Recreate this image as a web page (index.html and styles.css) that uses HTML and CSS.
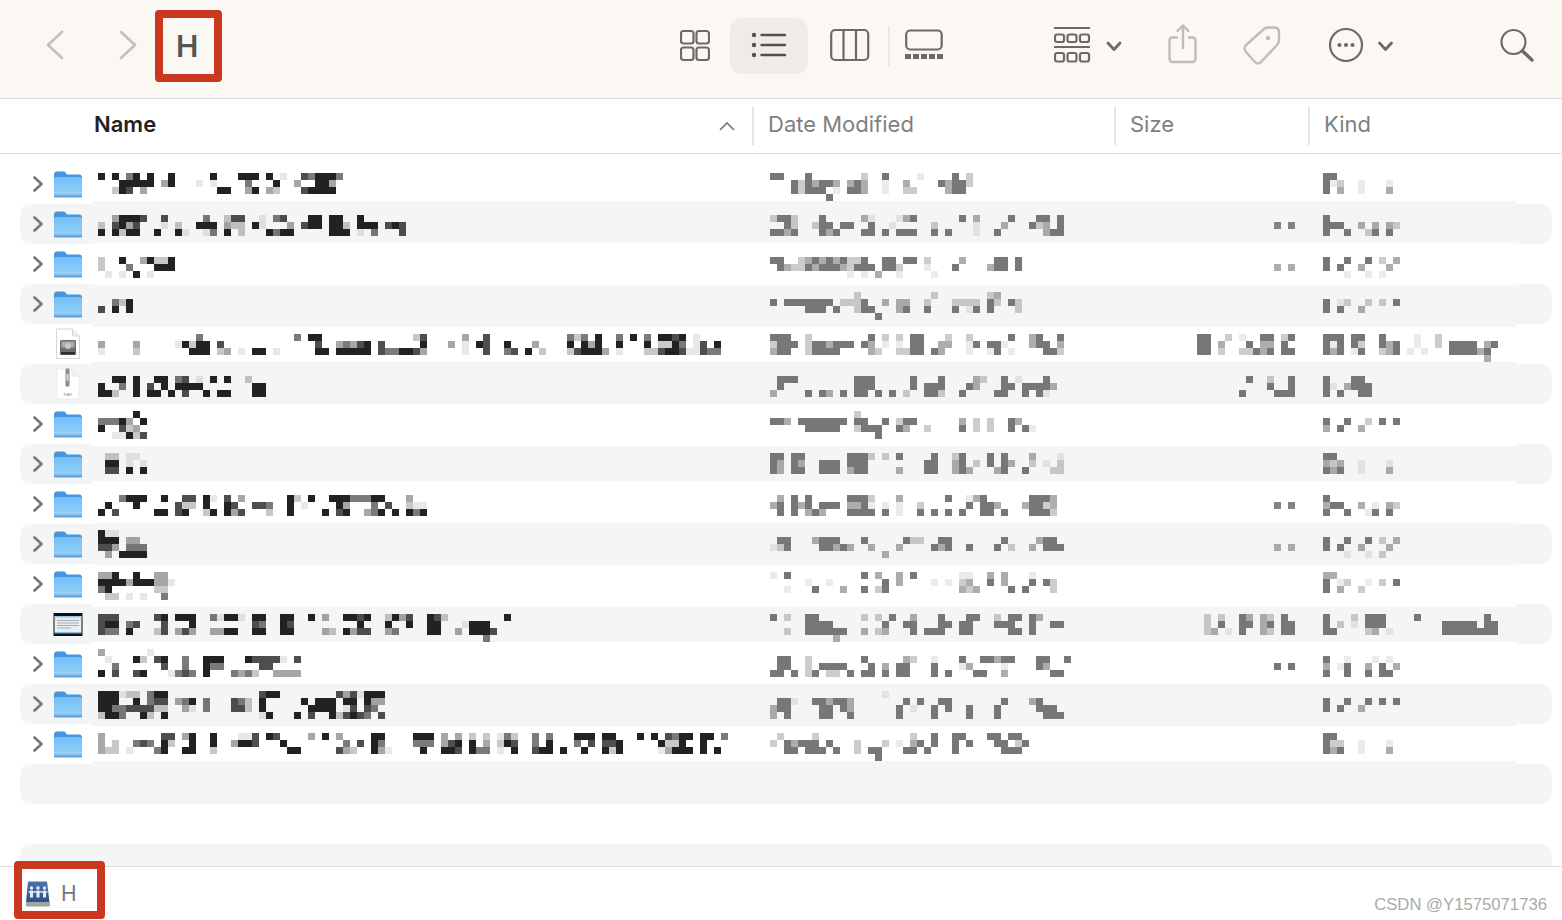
FILE: index.html
```html
<!DOCTYPE html>
<html>
<head>
    <title>H</title>
    <link rel="stylesheet" href="styles.css">
</head>
<body>
    <svg class="defs" width="0" height="0">
        <defs>
            <linearGradient id="folderFront" x1="0" y1="0" x2="0" y2="1">
                <stop offset="0" stop-color="#74bff6"></stop>
                <stop offset="0.75" stop-color="#8bcdfa"></stop>
                <stop offset="1" stop-color="#78bcee"></stop>
            </linearGradient>
            <linearGradient id="diskBlue" x1="0" y1="0" x2="0" y2="1">
                <stop offset="0" stop-color="#4a74aa"></stop>
                <stop offset="1" stop-color="#2d4f80"></stop>
            </linearGradient>
            <symbol id="chev" viewBox="0 0 12 16">
                <polyline points="2.5,1.5 9.5,8 2.5,14.5" fill="none" stroke="#777" stroke-width="2.6" stroke-linecap="round" stroke-linejoin="round"></polyline>
            </symbol>
            <symbol id="folder" viewBox="0 0 30 28">
                <path d="M1 5a3 3 0 0 1 3-3.500h7.500l2.500 3h12a3 3 0 0 1 3 3V14H1z" fill="#4595e2"></path>
                <rect x="1" y="7" width="28" height="20" rx="2" fill="url(#folderFront)"></rect>
                <rect x="1" y="25.500" width="28" height="2" rx="1" fill="#5a9fd6"></rect>
                <path d="M2 22.500h26" stroke="#aedbfb" stroke-width="0.600"></path>
            </symbol>
        </defs>
    </svg>

    <div class="window">
        <div class="toolbar">
            <svg class="back" width="22" height="60" viewBox="0 0 22 60"><polyline points="18,16 4,29 18,42" class="faint-line"></polyline></svg>
            <svg class="forward" width="22" height="60" viewBox="0 0 22 60"><polyline points="5,16 19,29 5,42" class="faint-line"></polyline></svg>
            <div class="title">H</div>

            <svg class="grid-view" width="30" height="60" viewBox="0 0 30 60">
                <g class="tool-line">
                    <rect x="1" y="15" width="12.500" height="12.500" rx="2.500"></rect>
                    <rect x="16.500" y="15" width="12.500" height="12.500" rx="2.500"></rect>
                    <rect x="1" y="31.500" width="12.500" height="12.500" rx="2.500"></rect>
                    <rect x="16.500" y="31.500" width="12.500" height="12.500" rx="2.500"></rect>
                </g>
            </svg>
            <div class="active-view">
                <svg width="78" height="56" viewBox="0 0 78 56">
                    <circle cx="24" cy="17" r="2.200" fill="#55504a"></circle>
                    <circle cx="24" cy="27" r="2.200" fill="#55504a"></circle>
                    <circle cx="24" cy="37" r="2.200" fill="#55504a"></circle>
                    <path d="M31.500 17H55M31.500 27H55M31.500 37H55" stroke="#55504a" stroke-width="2.400" stroke-linecap="round"></path>
                </svg>
            </div>
            <svg class="column-view" width="40" height="60" viewBox="0 0 40 60">
                <g class="tool-line">
                    <rect x="1.200" y="14" width="37" height="30" rx="4"></rect>
                    <path d="M13.500 14V44M26 14V44"></path>
                </g>
            </svg>
            <div class="tool-sep"></div>
            <svg class="gallery-view" width="40" height="60" viewBox="0 0 40 60">
                <rect x="1.200" y="14.500" width="35.500" height="19" rx="4" class="tool-line"></rect>
                <g fill="#6e6962">
                    <rect x="0" y="38" width="6" height="5"></rect>
                    <rect x="8" y="38" width="6" height="5"></rect>
                    <rect x="16" y="38" width="6" height="5"></rect>
                    <rect x="24" y="38" width="6" height="5"></rect>
                    <rect x="32" y="38" width="6" height="5"></rect>
                </g>
            </svg>
            <svg class="group-view" width="38" height="60" viewBox="0 0 38 60">
                <g class="tool-line">
                    <path d="M0 12H36M0 31H36"></path>
                    <rect x="1" y="18.500" width="9" height="7.500" rx="2"></rect>
                    <rect x="13.500" y="18.500" width="9" height="7.500" rx="2"></rect>
                    <rect x="26" y="18.500" width="9" height="7.500" rx="2"></rect>
                    <rect x="1" y="37" width="9" height="8.500" rx="2"></rect>
                    <rect x="13.500" y="37" width="9" height="8.500" rx="2"></rect>
                    <rect x="26" y="37" width="9" height="8.500" rx="2"></rect>
                </g>
            </svg>
            <svg class="drop" width="18" height="60" viewBox="0 0 18 60"><polyline points="2,27 8,33.500 14,27" class="chev-line"></polyline></svg>
            <svg class="share" width="30" height="60" viewBox="0 0 30 60">
                <g class="faint-tool">
                    <path d="M9 21.500H4.500a3 3 0 0 0-3 3V43a3 3 0 0 0 3 3h20a3 3 0 0 0 3-3V24.500a3 3 0 0 0-3-3H21"></path>
                    <path d="M15 10V32M9.500 15L15 9.500L20.500 15"></path>
                </g>
            </svg>
            <svg class="tag" width="38" height="60" viewBox="0 0 38 60">
                <path class="faint-tool" d="M3 29L21.500 12.500Q23 11.500 25 11.500H31Q36 11.500 36 16.500V24Q36 27 34 29L18 46Q15 49 12 46L3 36Q0 32 3 29Z"></path>
                <circle cx="25" cy="22" r="2.200" fill="#bfbbb5"></circle>
            </svg>
            <svg class="more" width="36" height="60" viewBox="0 0 36 60">
                <circle cx="17" cy="29" r="16" class="tool-line"></circle>
                <circle cx="10.500" cy="29" r="2.100" fill="#6e6962"></circle>
                <circle cx="17" cy="29" r="2.100" fill="#6e6962"></circle>
                <circle cx="23.500" cy="29" r="2.100" fill="#6e6962"></circle>
            </svg>
            <svg class="drop drop-more" width="18" height="60" viewBox="0 0 18 60"><polyline points="2.500,27 8.500,33.500 14.500,27" class="chev-line"></polyline></svg>
            <svg class="search" width="36" height="60" viewBox="0 0 36 60">
                <circle cx="14.500" cy="26" r="12" class="tool-line"></circle>
                <path d="M23.500 35L33 44" stroke="#6e6962" stroke-width="3.400" stroke-linecap="round"></path>
            </svg>
        </div>

        <div class="list-head">
            <div class="col col-name">
                <span>Name</span>
                <svg width="16" height="10" viewBox="0 0 16 10"><polyline points="1,9 8,2 15,9" fill="none" stroke="#777" stroke-width="1.600"></polyline></svg>
            </div>
            <div class="col">Date Modified</div>
            <div class="col">Size</div>
            <div class="col">Kind</div>
        </div>

        <div class="list">
            <div class="row"><svg class="chev"><use href="#chev"></use></svg><svg class="icon"><use href="#folder"></use></svg></div>
            <div class="row"><svg class="chev"><use href="#chev"></use></svg><svg class="icon"><use href="#folder"></use></svg></div>
            <div class="row"><svg class="chev"><use href="#chev"></use></svg><svg class="icon"><use href="#folder"></use></svg></div>
            <div class="row"><svg class="chev"><use href="#chev"></use></svg><svg class="icon"><use href="#folder"></use></svg></div>
            <div class="row">
                <span class="chev"></span>
                <svg class="icon" viewBox="0 0 30 32">
                    <path d="M3.500 1h16l7 7v22.500h-23z" fill="#fff" stroke="#d6d6d6"></path>
                    <path d="M19.500 1v7h7" fill="#f2f2f2" stroke="#d6d6d6"></path>
                    <rect x="7" y="12" width="16" height="15" rx="1.500" fill="#6b6f72"></rect>
                    <rect x="8.500" y="13.500" width="13" height="6" fill="#a8acaf"></rect>
                    <rect x="8" y="24" width="14" height="2.500" fill="#2d2f31"></rect>
                    <circle cx="15" cy="18" r="3" fill="#c4c6c8"></circle>
                </svg>
            </div>
            <div class="row">
                <span class="chev"></span>
                <svg class="icon" viewBox="0 0 30 32">
                    <path d="M4 1h15l7 7v23H4z" fill="#fff" stroke="#ececec"></path>
                    <path d="M19 1v7h7" fill="#f3f3f3" stroke="#e6e6e6"></path>
                    <rect x="12.500" y="0.500" width="4" height="18" rx="1" fill="#8a8d90"></rect>
                    <rect x="13.500" y="6" width="2" height="7" fill="#d8d8d8"></rect>
                    <text x="15" y="28" class="rar">RAR</text>
                </svg>
            </div>
            <div class="row"><svg class="chev"><use href="#chev"></use></svg><svg class="icon"><use href="#folder"></use></svg></div>
            <div class="row"><svg class="chev"><use href="#chev"></use></svg><svg class="icon"><use href="#folder"></use></svg></div>
            <div class="row"><svg class="chev"><use href="#chev"></use></svg><svg class="icon"><use href="#folder"></use></svg></div>
            <div class="row"><svg class="chev"><use href="#chev"></use></svg><svg class="icon"><use href="#folder"></use></svg></div>
            <div class="row"><svg class="chev"><use href="#chev"></use></svg><svg class="icon"><use href="#folder"></use></svg></div>
            <div class="row">
                <span class="chev"></span>
                <svg class="icon" viewBox="0 0 30 32">
                    <rect x="0.500" y="5" width="29" height="23" fill="#111"></rect>
                    <rect x="1.500" y="8" width="27" height="16" fill="#e8eef0"></rect>
                    <rect x="1.500" y="8" width="27" height="1.500" fill="#8fc8ee"></rect>
                    <path d="M4 12.500h22M4 15h22M4 17.500h22M4 20h14" stroke="#a8aeb2" stroke-width="1"></path>
                    <rect x="1.500" y="24" width="27" height="1.500" fill="#7dbbe6"></rect>
                </svg>
            </div>
            <div class="row"><svg class="chev"><use href="#chev"></use></svg><svg class="icon"><use href="#folder"></use></svg></div>
            <div class="row"><svg class="chev"><use href="#chev"></use></svg><svg class="icon"><use href="#folder"></use></svg></div>
            <div class="row"><svg class="chev"><use href="#chev"></use></svg><svg class="icon"><use href="#folder"></use></svg></div>
            <div class="row"></div>
            <div class="row"></div>
            <div class="row"></div>
        </div>

        <div class="status">
            <svg class="disk" width="26" height="28" viewBox="0 0 26 28">
                <path d="M3 1.500h19l2.500 21H1z" fill="url(#diskBlue)"></path>
                <rect x="1" y="22.500" width="24" height="4" rx="1" fill="#a5a595"></rect>
                <g fill="#e6edf5">
                    <circle cx="6.500" cy="8" r="1.700"></circle>
                    <circle cx="13" cy="8" r="1.700"></circle>
                    <circle cx="19.500" cy="8" r="1.700"></circle>
                    <rect x="5" y="10.500" width="3" height="7"></rect>
                    <rect x="11.500" y="10.500" width="3" height="7"></rect>
                    <rect x="18" y="10.500" width="3" height="7"></rect>
                    <rect x="3.500" y="11" width="19" height="2" opacity="0.700"></rect>
                </g>
            </svg>
            <span class="status-name">H</span>
        </div>

        <svg id="mosaic" class="mosaic" width="1562" height="920" viewBox="0 0 1562 920"></svg>
        <div class="mark mark-title"></div>
        <div class="mark mark-status"></div>
        <div class="watermark">CSDN @Y1575071736</div>
    </div>

    <script src="script.js"></script>
</body>
</html>
```

FILE: styles.css
```css
* {
    margin: 0;
    padding: 0;
    box-sizing: border-box;
}

body {
    font-family: 'Inter', 'Liberation Sans', sans-serif;
    background: #fff;
    overflow: hidden;
}

.defs {
    position: absolute;
}

.window {
    position: relative;
    display: flex;
    flex-direction: column;
    width: 1562px;
    height: 920px;
    overflow: hidden;
}

/* toolbar */
.toolbar {
    display: flex;
    align-items: center;
    flex: none;
    height: 99px;
    padding: 0 0 7px 44px;
    background: #fbf8f4;
    border-bottom: 1px solid #dcdad7;
}

.toolbar svg {
    flex: none;
    display: block;
}

.tool-line {
    fill: none;
    stroke: #6e6962;
    stroke-width: 2.2;
}

.faint-line {
    fill: none;
    stroke: #c4c0ba;
    stroke-width: 2.8;
    stroke-linecap: round;
    stroke-linejoin: round;
}

.faint-tool {
    fill: none;
    stroke: #bfbbb5;
    stroke-width: 2.4;
    stroke-linecap: round;
    stroke-linejoin: round;
}

.chev-line {
    fill: none;
    stroke: #6e6962;
    stroke-width: 2.8;
    stroke-linecap: round;
    stroke-linejoin: round;
}

.forward { margin-left: 50px; }

.title {
    flex: none;
    width: 24px;
    margin-left: 38px;
    font-size: 30px;
    font-weight: 600;
    color: #555;
    line-height: 36px;
}

.grid-view { margin-left: 480px; }

.active-view {
    flex: none;
    width: 78px;
    height: 56px;
    margin-left: 20px;
    background: #efece8;
    border-radius: 12px;
}

.column-view { margin-left: 22px; }

.tool-sep {
    flex: none;
    width: 2px;
    height: 40px;
    margin-left: 18px;
    background: #ebe8e3;
}

.gallery-view { margin-left: 15px; }
.group-view { margin-left: 109px; }
.drop { margin-left: 14px; }
.share { margin-left: 44px; }
.tag { margin-left: 45px; }
.more { margin-left: 48px; }
.drop-more { margin-left: 12px; }
.search { margin-left: 104px; }

/* column headers */
.list-head {
    display: grid;
    grid-template-columns: 752px 362px 194px 1fr;
    align-items: center;
    flex: none;
    height: 55px;
    background: #fff;
    border-bottom: 1px solid #dedede;
    font-size: 22px;
    color: #808080;
}

.col {
    height: 38px;
    line-height: 34px;
    padding-left: 14px;
    border-left: 2px solid #e4e4e4;
}

.col-name {
    display: flex;
    align-items: center;
    justify-content: space-between;
    padding: 0 17px 0 94px;
    border-left: none;
    font-weight: 600;
    color: #222;
}

.col-name span {
    line-height: 34px;
    margin-top: -4px;
}

/* rows */
.list {
    flex: 1;
    min-height: 0;
    overflow: hidden;
    padding: 10px 10px 0 20px;
}

.row {
    display: flex;
    align-items: center;
    height: 40px;
    border-radius: 10px;
}

.row:nth-child(even) {
    background: #f4f5f5;
}

.chev {
    flex: none;
    width: 12px;
    height: 16px;
    margin-left: 12px;
}

.icon {
    flex: none;
    width: 30px;
    height: 32px;
    margin-left: 9px;
}

.rar {
    font-family: 'Liberation Sans', sans-serif;
    font-size: 4px;
    text-anchor: middle;
    fill: #888;
}

/* status bar */
.status {
    display: flex;
    align-items: center;
    flex: none;
    height: 54px;
    padding-left: 25px;
    background: #fff;
    border-top: 1px solid #dcdcdc;
}

.status-name {
    margin-left: 10px;
    font-size: 21px;
    color: #777;
}

/* censored columns and the red annotation boxes lie over the list */
.mosaic {
    position: absolute;
    top: 0;
    left: 0;
    shape-rendering: crispEdges;
    pointer-events: none;
}

.mark {
    position: absolute;
    border: 8px solid #c9371f;
    border-radius: 4px;
}

.mark-title {
    top: 10px;
    left: 155px;
    width: 67px;
    height: 72px;
}

.mark-status {
    top: 861px;
    left: 14px;
    width: 91px;
    height: 58px;
}

.watermark {
    position: absolute;
    right: 15px;
    bottom: 5px;
    font-family: 'Liberation Sans', sans-serif;
    font-size: 16.700px;
    color: #aaa;
}
```

FILE: script.js
```js
// The file data in the reference is pixelated: 7px cells on one grid.
// Each line is keyed by its top y; tokens are a column index + cell shades.
const NAME_X = 98;
const INFO_X = 770;
const CELL = 7;
const SHADE = { '.': 0.1, ':': 0.25, '+': 0.4, 'o': 0.6, 'x': 0.8, '#': 1 };

const BANDS = [[201, 243], [285, 327], [362, 404], [446, 481], [523, 565], [607, 642], [684, 726], [761, 765]];

const NAMES = {
    173: "0# 2# 4o# 7# 10# 16# 20### 24# 26. 29xo###o",
    180: "3## 5### 9+# 14. 16. 21o 25# 28+ 31##+",
    187: "2:#x 6+ 17## 21+# 24+: 29x####",
    215: "2+###x 9x 15o 18:xx 23. 25ox 30## 33## 37#",
    222: "0: 2x#+x 9. 11: 14### 18+:: 22#. 27+ 29x## 33##: 37### 41x#x",
    229: "0# 2#:## 8# 11#. 15.o 18# 20: 24#o## 33### 37. 39o 43x",
    257: "0: 3# 6+#::#",
    264: "0: 4o 8###",
    271: "1. 3. 5# 7.",
    299: "2o:#",
    306: "0x 2# 4#",
    334: "14o 28o 30## 45:x 52+ 55x 67o:o 71# 74o 76# 78o 80##x# 85.",
    341: "0+ 5+ 11.#: 14## 17x 31x 34+o+x# 40x 46# 50+ 52. 54#x 58# 62+ 67# 69#+# 74# 78# 80::#o 85.x 88#",
    348: "0. 5: 13### 17:+ 20. 22## 25. 31## 34##### 40xoo##x+ 52. 55x 58ox 61# 63: 67:x###+ 74. 78::x##x..xoo",
    376: "2## 5# 8## 11ox 14. 16# 18# 21:",
    383: "0# 3o 5# 7x 9# 11#### 22##",
    390: "0##: 5# 7## 10# 12x 15# 17## 22##",
    411: "5#",
    418: "0ooo#+ 6#",
    425: "0# 3x:+",
    432: "2.. 4#:x",
    453: "1:: 4..",
    460: "1## 4. 6.",
    467: "1xx 4# 6#",
    495: "3o### 9# 12xx 15#. 18x 20+ 27#: 30# 33###ooo## 44+",
    502: "1# 5# 11x:: 15# 18#x 22xxo 27# 29. 34#+ 39o 41x 44:..",
    509: "0# 2x 8## 11x# 15:# 18#+x 24: 27# 32# 34x# 38+o# 42# 44#o#",
    530: "0#..",
    537: "0### 4++",
    544: "0xx+ 4ooo",
    551: "1+ 3####",
    572: "0++# 5# 8++",
    579: "0####+###++.",
    586: "0o# 8::",
    593: "1:: 4. 6. 9o",
    614: "0xxx 8x# 11### 16o.##. 22## 26## 30# 32+ 35##x# 41:#+x 47#x: 58#",
    621: "0x## 4ox 9x 13# 22xo 26#x 37# 41# 44# 47## 52.###",
    628: "0xoo 4# 8:x 11+x+ 16++## 22## 26## 32+: 35#+xx 41+o 47## 51+ 53###x",
    635: "55o",
    649: "0+ 7.",
    656: "1. 5#: 8x# 12o 15### 21#xxxx. 28x",
    663: "2o 9x 12o 15#oo 23xx",
    670: "0# 2x 5x# 10.oxo 15# 19o+o: 25++++",
    691: "0### 3.:: 7o## 23x## 34x+x.###",
    698: "0### 5# 7oxx 11+o# 15o 19xo: 23# 29# 31### 35## 38#++",
    705: "0##ooxxxx:: 12+. 15o 19xx: 23# 30#### 35.x 38xo",
    712: "0:##o 6#: 9# 23.# 28# 30x 33#:x#xo 40x",
    733: "0+ 9xx 12+# 16# 20.. 22x 24#x 30+ 32# 34+ 39## 45### 49+ 51+ 53: 55: 57.o: 62o 64o 68### 72## 77# 79# 81xo## 86## 89o",
    740: "0+ 2: 5oxo 9#: 13# 16# 19+##x 26# 35o 37x 39#o 45ooo 49+x# 53# 55+ 57:#x 62o 64# 68o 70x 72xx# 80#::# 86#",
    747: "0+:: 4. 8o# 12## 16: 27## 34x+: 39#+. 46# 49##x 53#oo 57. 59# 62x## 66# 69# 72#:# 80.+### 86# 88#"
};

// date, size and kind columns share one grid from x=770
const INFOS = {
    173: "0## 5# 13: 16# 21. 26# 28: 79##",
    180: "3#:#+#x+ 11+#+ 16. 19+ 24#+##: 79#.: 84. 88.",
    187: "3#:### 9. 11##+ 16. 19:: 25+## 79# 81+ 84. 88+",
    194: "8#",
    215: "0:##: 7# 13+. 18.+# 27# 29+ 34# 38## 41# 79#",
    222: "2#: 6:## 10## 14# 17. 23: 29. 33+ 37#:+ 41# 72o 74o 79### 84+ 86+ 88+:",
    229: "0##+# 7#+# 13## 16# 18### 23# 25# 29. 32# 39+## 79# 82# 85: 86# 88#",
    257: "0## 4:+ 6#+ 8#+#:: 13# 16## 19#x 22: 27+ 32## 35# 79# 82# 85# 87: 89+",
    264: "1#+:: 5#+x# 9#+:## 13## 16##: 22. 26# 31+# 33# 35# 72+ 74+ 79# 81# 84+ 88+",
    271: "11. 13. 15+ 18. 23. 82. 85. 87.",
    292: "12: 23: 31:+",
    299: "0x 2####### 10::: 13# 16+ 18++ 22: 26:::: 31#: 34#: 79# 81.: 85: 87: 89#",
    306: "5### 9# 12: 13## 18+# 22# 26# 28. 29# 31# 35: 79# 81# 84+",
    313: "15#",
    334: "0### 5: 14# 16: 18: 20## 25: 28: 34# 37+# 41# 61## 65: 67. 70## 73:# 79### 83## 87# 92. 95:",
    341: "0:### 5: 6##+### 13#+ 16. 18. 20## 24++ 28. 29# 31# 32# 33. 37+## 41+ 61## 64+ 68# 70++ 73# 79#.# 83#: 87#+ 89# 92. 95: 97#### 102+#",
    348: "0+## 5: 6#### 14+: 18:: 20## 23#+ 28. 31. 32# 34. 39## 41: 61## 64: 67:: 69# 70+# 73## 79#+# 83. 84# 87:+# 91. 93. 97####+ 102#",
    355: "102+",
    376: "1### 12### 20# 24# 29+: 33# 35. 39# 68# 71: 74# 79# 83##",
    383: "1# 12### 20# 22### 28#+ 33## 36####+ 71# 74# 79#. 82+###",
    390: "0+ 5# 7#+ 10# 12## 15# 17# 19: 22##: 27# 32## 36# 38# 39. 67# 72### 79# 81# 84##",
    411: "12:",
    418: "0xx+ 4####### 12## 16# 18:# 20# 27+ 29: 31: 34#+ 79# 82# 85: 87# 89#",
    425: "5###x# 12:# 14## 18#+ 22: 27# 29: 31: 34# 36#. 79+ 81# 84+",
    432: "15#",
    453: "0## 3## 11### 14: 16: 18# 23# 26:# 31# 33# 37+ 41. 79##",
    460: "0#+ 3#+ 7### 11### 22## 26+# 29: 31# 33#+ 37: 39. 41: 79+: 81+ 84. 88.",
    467: "0#+ 3## 7### 11+## 18+ 22## 26+#+ 32+# 36# 40:: 79#+# 84. 88+",
    495: "1+ 3# 5# 11###: 18+ 25# 28.+# 37### 40+ 79#",
    502: "0+# 3#+# 7### 11++# 14. 16. 18. 21: 28# 30## 32+ 36+# 38#: 40+ 72o 74o 79+## 84+ 86. 88+:",
    509: "1# 3# 5+#+ 11### 14# 16# 18. 21# 23# 25# 27# 30## 33# 37### 40: 79# 82# 85. 86# 88#",
    537: "1## 6+x 8## 13# 19x 20:: 24x# 33# 38+x# 79# 82# 85# 87: 89+",
    544: "0.: 2# 7##+# 11+ 14+ 18+ 23x 24+# 28# 32# 34: 37+ 39### 72+ 74+ 79# 81# 84+ 88+",
    551: "16+ 82. 85. 87:",
    572: "0. 2# 13# 15+ 18+ 20# 27.. 31+ 33+ 37. 79++",
    579: "5. 8. 16# 18+ 23. 25. 27:+ 31# 33+ 37# 39# 40: 79# 81.: 85. 87: 89#",
    586: "2. 6# 10+ 13# 15:# 27+:+ 34# 36# 40: 79# 81+ 84:",
    614: "0# 2: 5## 13: 15: 17# 20+ 24# 28## 32: 34## 37#+ 62: 64: 67#+ 70+: 73# 79# 83: 85### 92# 102#",
    621: "5#### 16# 19## 24## 27## 32### 37# 40## 62: 64# 67## 70+# 73## 79# 81: 83. 85### 96##### 102##",
    628: "2: 5###### 13+ 15:+ 20# 22### 27## 34## 37# 62:+ 65. 67# 70+: 73## 79## 85:+ 88. 96###### 102##",
    635: "9+",
    656: "1## 5: 13# 19+: 23. 27# 30##+# 34# 38## 42# 79# 82. 86. 88.",
    663: "1## 5: 7#### 14# 16+ 18## 23# 27.+ 33. 38#+ 72# 74# 79+ 81. 82# 85+ 87# 89+",
    670: "0## 3# 5:# 8:: 11# 13## 16# 18## 23# 25# 29## 33+ 40## 79# 82# 85# 87# 88#",
    691: "16.",
    698: "1## 3. 6##+## 11+ 19# 21# 24## 33# 37+x 79# 82# 85# 87# 89#",
    705: "0+ 1# 2# 7## 10# 11+ 18# 20. 23# 25# 28# 32# 38# 39## 79# 81# 84+",
    712: "0+ 2# 7## 11# 18# 23# 28# 32# 39###",
    733: "1: 6: 20: 23# 26## 31## 34## 79##",
    740: "0: 2#+ 4### 8# 12: 16: 18. 20+# 23# 26# 28# 32## 35:# 79#: 81: 84. 88.",
    747: "2## 5### 9# 12: 14## 19## 22# 26# 33### 35: 79#+# 84. 88+",
    754: "15#"
};

const svg = document.getElementById('mosaic');

function rect(x, y, w, h, fill, opacity) {
    const r = document.createElementNS('http://www.w3.org/2000/svg', 'rect');
    r.setAttribute('x', x);
    r.setAttribute('y', y);
    r.setAttribute('width', w);
    r.setAttribute('height', h);
    r.setAttribute('fill', fill);
    if (opacity < 1) r.setAttribute('opacity', opacity);
    svg.appendChild(r);
}

function drawLines(lines, originX, fill, boost) {
    Object.keys(lines).forEach((y) => {
        lines[y].split(' ').forEach((token) => {
            const m = token.match(/^(\d+)(\D+)$/);
            [...m[2]].forEach((c, i) => {
                const x = originX + (Number(m[1]) + i) * CELL;
                rect(x, Number(y), CELL, CELL, fill, Math.min(1, SHADE[c] * boost));
            });
        });
    });
}

rect(92, 165, 1425, 600, '#fff', 1);
BANDS.forEach(([top, bottom]) => rect(92, top, 1425, bottom - top, '#f4f5f5', 1));
drawLines(NAMES, NAME_X, '#222', 1);
drawLines(INFOS, INFO_X, '#777', 1.5);
```
